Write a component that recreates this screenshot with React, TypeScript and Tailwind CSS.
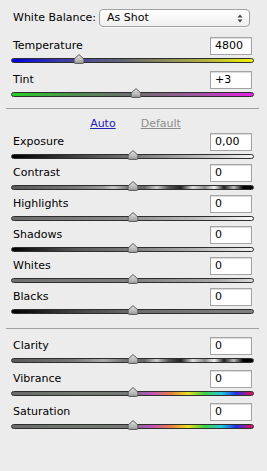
import React from "react";

type Row = {
  label: string;
  value: string;
  pos: number;
  track: string;
};

const topRows: Row[] = [
  {
    label: "Temperature",
    value: "4800",
    pos: 28,
    track: "bg-[linear-gradient(to_right,#0000e6,#3a3aa8_20%,#6c6c6c_50%,#b0b040_80%,#f2f200)]",
  },
  {
    label: "Tint",
    value: "+3",
    pos: 51.5,
    track: "bg-[linear-gradient(to_right,#22d022,#4f8f4f_25%,#6c6c6c_50%,#9a5a9a_75%,#e81ee8)]",
  },
];

const toneRows: Row[] = [
  {
    label: "Exposure",
    value: "0,00",
    pos: 50.2,
    track: "bg-[linear-gradient(to_right,#000,#555_35%,#8c8c8c_60%,#f4f4f4_100%)]",
  },
  {
    label: "Contrast",
    value: "0",
    pos: 50.2,
    track:
      "bg-[linear-gradient(to_right,#5a5a5a,#777_25%,#9a9a9a_38%,#c8c8c8_42%,#777_48%,#666_55%,#ccc_60%,#555_65%,#222_70%,#ddd_75%,#888_80%,#eee_84%,#222_88%,#bbb_92%,#000_96%,#000)]",
  },
  {
    label: "Highlights",
    value: "0",
    pos: 50.2,
    track: "bg-[linear-gradient(to_right,#6a6a6a,#8a8a8a_45%,#b8b8b8_75%,#fafafa)]",
  },
  {
    label: "Shadows",
    value: "0",
    pos: 50.2,
    track: "bg-[linear-gradient(to_right,#000,#555_25%,#7c7c7c_50%,#b0b0b0_75%,#f0f0f0)]",
  },
  {
    label: "Whites",
    value: "0",
    pos: 50.2,
    track: "bg-[linear-gradient(to_right,#707070,#808080_50%,#a8a8a8_85%,#d8d8d8)]",
  },
  {
    label: "Blacks",
    value: "0",
    pos: 50.2,
    track: "bg-[linear-gradient(to_right,#000,#404040_25%,#6c6c6c_50%,#808080)]",
  },
];

const presenceRows: Row[] = [
  {
    label: "Clarity",
    value: "0",
    pos: 50.2,
    track:
      "bg-[linear-gradient(to_right,#5a5a5a,#777_25%,#aaa_38%,#777_46%,#666_55%,#ccc_60%,#555_65%,#222_70%,#ddd_75%,#888_80%,#eee_84%,#222_88%,#bbb_92%,#000_96%,#000)]",
  },
  {
    label: "Vibrance",
    value: "0",
    pos: 50.2,
    track:
      "bg-[linear-gradient(to_right,#6a6a6a,#707a70_30%,#787878_50%,#c050c0_58%,#e88040_66%,#e8e020_73%,#40d040_80%,#20c8e0_87%,#2030e8_93%,#e81050)]",
  },
  {
    label: "Saturation",
    value: "0",
    pos: 50.2,
    track:
      "bg-[linear-gradient(to_right,#6a6a6a,#707a70_30%,#787878_50%,#c050c0_58%,#e88040_66%,#e8e020_73%,#40d040_80%,#20c8e0_87%,#2030e8_93%,#e81050)]",
  },
];

function Thumb() {
  return (
    <svg width="11" height="10" viewBox="0 0 11 10" className="block">
      <defs>
        <linearGradient id="tg" x1="0" y1="0" x2="0" y2="1">
          <stop offset="0" stopColor="#e6e6e6" />
          <stop offset="1" stopColor="#9c9c9c" />
        </linearGradient>
      </defs>
      <path
        d="M5.5 0.6 L10.4 5 L10.4 8.2 Q10.4 9.4 9.2 9.4 L1.8 9.4 Q0.6 9.4 0.6 8.2 L0.6 5 Z"
        fill="url(#tg)"
        stroke="#4a4a4a"
        strokeWidth="0.9"
      />
    </svg>
  );
}

function Slider({ row, gap }: { row: Row; gap: string }) {
  return (
    <div>
      <div className="flex h-[18px] items-center justify-between pl-[2px] pr-[2px]">
        <span className="whitespace-nowrap text-[11px] text-black">{row.label}</span>
        <div className="flex h-[18px] w-[42px] items-center border border-[#a4a4a4] bg-white pl-[4px] text-[11px] text-black shadow-[inset_0_1px_1px_rgba(0,0,0,0.15)]">
          {row.value}
        </div>
      </div>
      <div className={`${gap} pt-[3px]`}>
        <div className="relative h-[5px]">
          <div className={`h-[5px] rounded-full border border-[#2e2e2e] ${row.track}`} />
          <div
            className="absolute top-[-4px] -translate-x-1/2"
            style={{ left: `${row.pos}%` }}
          >
            <Thumb />
          </div>
        </div>
      </div>
    </div>
  );
}

function Separator({ className }: { className: string }) {
  return <div className={`-mx-[5px] h-px bg-[#a2a2a2] ${className}`} />;
}

export default function App() {
  return (
    <div
      className="h-[471px] w-[267px] overflow-hidden bg-[#ececec] pl-[11px] pr-[13px] pt-[9px]"
      style={{ fontFamily: '"DejaVu Sans", "Noto Sans", sans-serif' }}
    >
      <div className="flex h-[18px] items-center pl-[2px] pr-[4px]">
        <span className="shrink-0 whitespace-nowrap text-[11px] text-black">White Balance:</span>
        <div className="ml-auto flex h-[18px] w-[151px] shrink-0 items-center justify-between rounded-[4px] border border-[#a0a0a0] bg-[linear-gradient(to_bottom,#ffffff,#f0f0f0)] pl-[7px] pr-[6px] text-[11px] text-black shadow-[0_1px_0_rgba(255,255,255,0.8)]">
          <span>As Shot</span>
          <svg width="6" height="9" viewBox="0 0 6 9">
            <path d="M3 0.5 L5.5 3.5 L0.5 3.5 Z" fill="#444" />
            <path d="M3 8.5 L5.5 5.5 L0.5 5.5 Z" fill="#444" />
          </svg>
        </div>
      </div>

      <div className="mt-[10px]">
        {topRows.map((row) => (
          <Slider key={row.label} row={row} gap="h-[16px]" />
        ))}
      </div>

      <Separator className="mt-[3px]" />

      <div className="mt-[8px] flex h-[14px] items-center justify-center gap-[25px] pl-[6px] text-[11px]">
        <span className="text-[#2222b8] underline">Auto</span>
        <span className="text-[#8c8c8c] underline">Default</span>
      </div>

      <div className="mt-[2px]">
        {toneRows.map((row) => (
          <Slider key={row.label} row={row} gap="h-[13px]" />
        ))}
      </div>

      <Separator className="mt-[9px]" />

      <div className="mt-[8px]">
        {presenceRows.map((row) => (
          <Slider key={row.label} row={row} gap="h-[15px]" />
        ))}
      </div>
    </div>
  );
}
